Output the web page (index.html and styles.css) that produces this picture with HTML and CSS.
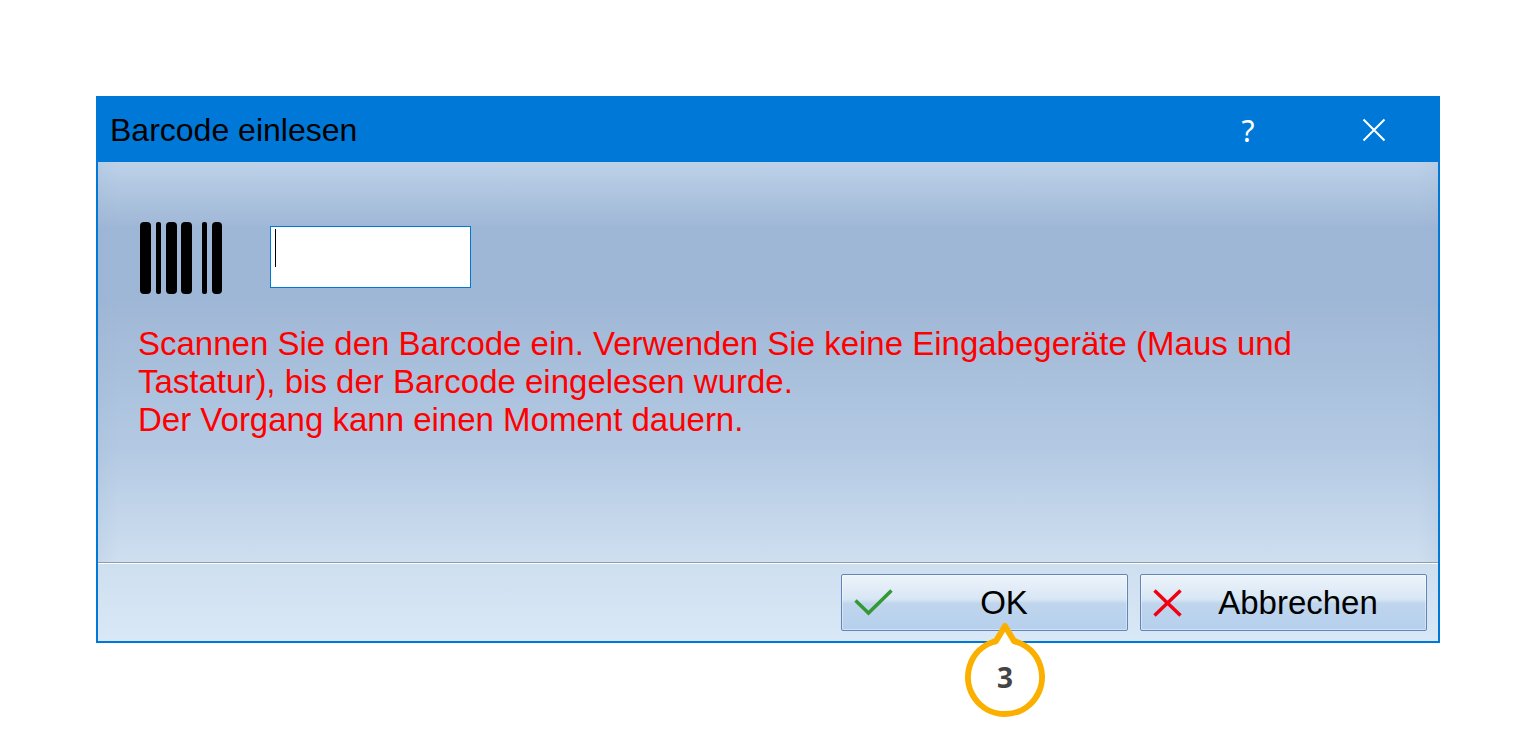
FILE: index.html
```html
<!DOCTYPE html>
<html lang="de">
<head>
    <meta charset="UTF-8">
    <meta name="viewport" content="width=device-width, initial-scale=1.0">
    <title>Barcode einlesen</title>
    <link rel="stylesheet" href="styles.css">
</head>
<body>

    <div class="dialog" role="dialog" aria-labelledby="title">
        <header class="titlebar">
            <h1 id="title">Barcode einlesen</h1>
            <button type="button" class="title-button help" aria-label="Hilfe">?</button>
            <button type="button" class="title-button" aria-label="Schließen">
                <svg width="24" height="24" viewBox="0 0 24 24" fill="none" stroke="white" stroke-width="2">
                    <path d="M1.5 1.5L22.5 22.5M22.5 1.5L1.5 22.5"/>
                </svg>
            </button>
        </header>

        <main class="content">
            <div class="scan-row">
                <label for="barcode" aria-label="Barcode">
                    <svg width="84" height="72" viewBox="0 0 84 72">
                        <rect x="2" y="0" width="11" height="72" rx="4"/>
                        <rect x="18" y="0" width="5" height="72" rx="2"/>
                        <rect x="28" y="0" width="11" height="72" rx="4"/>
                        <rect x="43" y="0" width="11" height="72" rx="4"/>
                        <rect x="64" y="0" width="5" height="72" rx="2"/>
                        <rect x="74" y="0" width="10" height="72" rx="4"/>
                    </svg>
                </label>
                <div class="field">
                    <input type="text" id="barcode">
                    <span class="caret"></span>
                </div>
            </div>
            <p class="hint">
                Scannen Sie den Barcode ein. Verwenden Sie keine Eingabegeräte (Maus und<br>
                Tastatur), bis der Barcode eingelesen wurde.<br>
                Der Vorgang kann einen Moment dauern.
            </p>
        </main>

        <footer class="actions">
            <div class="action">
                <button type="button" class="button">
                    <svg width="39" height="28" viewBox="0 0 39 28" fill="none" stroke="#339933" stroke-width="3.500">
                        <path d="M1.500 11.500L14.500 24L37.500 1.500"/>
                    </svg>
                    <span>OK</span>
                </button>
                <div class="marker">
                    <svg width="80" height="96" viewBox="0 0 80 96">
                        <path d="M31 19L40 4L49 19Q50 19.500 52 20A37 37 0 1 1 28 20Q30 19.500 31 19Z" fill="white" stroke="#fbb000" stroke-width="6" stroke-linejoin="round"/>
                    </svg>
                    <span class="marker-number">3</span>
                </div>
            </div>
            <div class="action">
                <button type="button" class="button">
                    <svg width="29" height="28" viewBox="0 0 29 28" fill="none" stroke="#f00010" stroke-width="3.500">
                        <path d="M1.500 1.500L27.500 26.500M27.500 1.500L1.500 26.500"/>
                    </svg>
                    <span>Abbrechen</span>
                </button>
            </div>
        </footer>
    </div>

</body>
</html>
```
FILE: styles.css
```css
* {
    box-sizing: border-box;
}
body {
    margin: 0;
    padding: 96px;
    font-family: "Liberation Sans", Arial, sans-serif;
    font-size: 33px;
    background-color: white;
    color: black;
}
svg {
    display: block;
}
.dialog {
    border: 2px solid #0078d7;
    background: linear-gradient(#bdd2e9 64px, #9fb7d6 130px, #9fb7d6 200px, #b3c9e3 350px, #cddeef 460px, #d9e8f6);
}
.titlebar {
    display: flex;
    align-items: center;
    height: 64px;
    padding-left: 12px;
    background-color: #0078d7;
}
.titlebar h1 {
    flex: 1;
    margin: 0;
    font-size: 32px;
    font-weight: normal;
}
.title-button {
    display: flex;
    align-items: center;
    justify-content: center;
    width: 128px;
    height: 64px;
    padding: 0;
    border: none;
    background: none;
    color: white;
}
.help {
    width: 124px;
    font-family: "Noto Sans", sans-serif;
    font-size: 30px;
}
.content {
    min-height: 400px;
    padding: 60px 40px 0;
    background: linear-gradient(90deg, rgba(150, 175, 205, 0.15), rgba(150, 175, 205, 0) 20px calc(100% - 20px), rgba(150, 175, 205, 0.15));
}
.scan-row {
    display: flex;
    gap: 48px;
}
.field {
    position: relative;
    padding-top: 4px;
}
.field input {
    display: block;
    width: 201px;
    height: 62px;
    padding: 0 4px;
    border: 1px solid #0078d7;
    background-color: white;
    font: inherit;
}
.caret {
    position: absolute;
    top: 7px;
    left: 5px;
    width: 1px;
    height: 38px;
    background-color: black;
}
.hint {
    margin: 31px 0 0;
    color: #ff0000;
    line-height: 38px;
}
.actions {
    display: flex;
    justify-content: flex-end;
    gap: 12px;
    padding: 11px 11px 10px;
    border-top: 1px solid #8f9cab;
    box-shadow: inset 0 1px white;
}
.action {
    position: relative;
}
.button {
    display: flex;
    align-items: center;
    width: 287px;
    height: 57px;
    padding: 0 12px;
    border: 1px solid #6484b8;
    border-radius: 2px;
    background: linear-gradient(#edf4fb, #d8e6f4 44%, #c0d5ed 52%, #b5d0ed);
    box-shadow: inset 0 0 0 1px rgba(255, 255, 255, 0.4);
    color: black;
    font: inherit;
}
.button span {
    flex: 1;
    text-align: center;
}
.marker {
    position: absolute;
    top: 48px;
    left: 124px;
}
.marker-number {
    position: absolute;
    top: 36px;
    left: 0;
    width: 80px;
    color: #444444;
    font-family: "Open Sans", sans-serif;
    font-size: 28px;
    font-weight: bold;
    line-height: 38px;
    text-align: center;
}
```
